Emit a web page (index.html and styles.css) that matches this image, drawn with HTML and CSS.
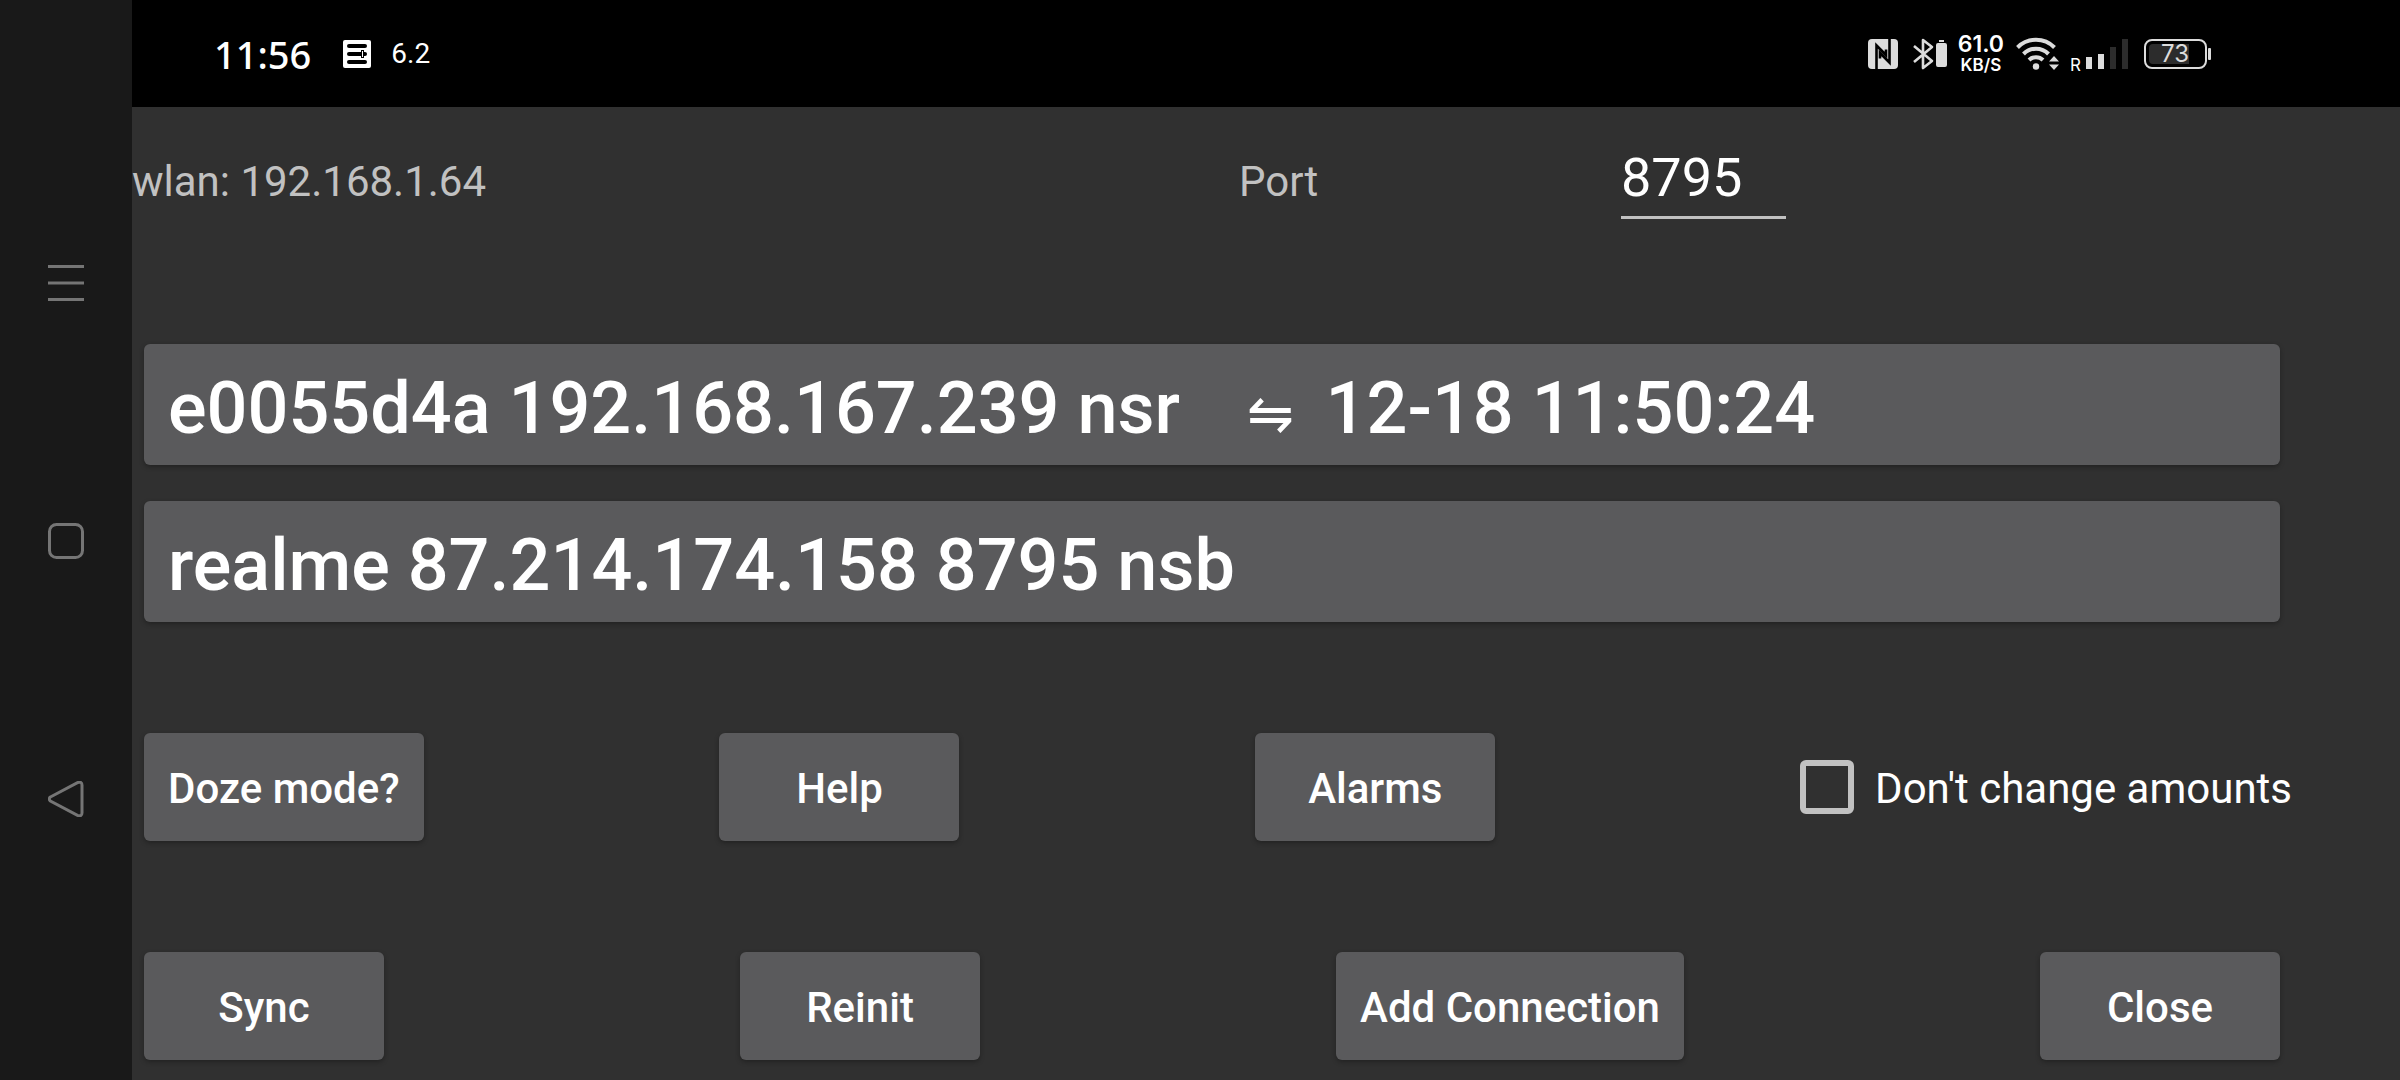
FILE: index.html
```html
<!DOCTYPE html>
<html lang="en">
<head>
<meta charset="utf-8">
<meta name="viewport" content="width=device-width, initial-scale=1">
<title>Connections</title>
<link rel="stylesheet" href="styles.css">
</head>
<body>
<nav class="nav" aria-label="System navigation">
  <button class="nav-key" type="button" aria-label="Recent apps">
    <svg viewBox="0 0 36 36"><path d="M0 1.5h36M0 18h36M0 34.5h36"/></svg>
  </button>
  <button class="nav-key" type="button" aria-label="Home">
    <svg viewBox="0 0 36 36"><rect x="1.5" y="1.5" width="33" height="33" rx="7"/></svg>
  </button>
  <button class="nav-key" type="button" aria-label="Back">
    <svg viewBox="0 0 36 36"><path d="M2.4 16 29.5 1.6q4.5-1.600 4.500 2.600v27.600q0 4.200-4.500 2.600L2.400 20q-2.400-2 0-4z"/></svg>
  </button>
</nav>
<div class="screen">
  <header class="status">
    <div class="status-group">
      <span class="clock">11:56</span>
      <svg class="app-icon" viewBox="0 0 28 28"><rect width="28" height="28" rx="2" fill="#fff"/><g fill="#000"><rect x="4" y="4" width="20" height="4" rx="2"/><rect x="4" y="12" width="20" height="4" rx="2"/><rect x="4" y="20" width="20" height="4" rx="2"/></g><rect x="18.500" y="10.500" width="2" height="7" fill="#fff" stroke="#000"/></svg>
      <span class="reading">6.2</span>
    </div>
    <div class="status-group">
      <svg class="nfc" viewBox="0 0 30 30"><rect width="30" height="30" rx="4" fill="#dcdcdc"/><path d="M8.500 30V6.500L18 16v-5.500M21.500 0v23.500L12 14v5.500" fill="none" stroke="#000" stroke-width="2.600"/></svg>
      <svg class="bluetooth" viewBox="0 0 34 34"><path d="M1 9l18 15-9 7V3l9 7L1 25" fill="none" stroke="#dcdcdc" stroke-width="2.600" stroke-linejoin="round"/><path d="M26 3h5v2h-5zM25 6h7q2 0 2 2v20q0 2-2 2h-7q-2 0-2-2V8q0-2 2-2z" fill="#dcdcdc"/></svg>
      <span class="speed"><span class="speed-value">61.0</span><span class="speed-unit">KB/S</span></span>
      <svg class="wifi" viewBox="0 0 46 36"><g fill="none" stroke="#dcdcdc" stroke-width="4"><path d="M1.500 11.500a26 26 0 0 1 37 0"/><path d="M7.500 18a17.500 17.500 0 0 1 25 0"/><path d="M13 24a10 10 0 0 1 14 0"/></g><g fill="#dcdcdc"><circle cx="20" cy="30.500" r="3.200"/><path d="M38 20l5 5.500H33zM38 34l5-5.500H33z"/></g></svg>
      <span class="roaming">R</span>
      <svg class="signal" viewBox="0 0 43 30"><path d="M0 18h6v12H0zM12 15h6v15h-6z" fill="#dcdcdc"/><path d="M24 8h6v22h-6zM36 0h6v30h-6z" fill="#2c2c2c"/></svg>
      <span class="battery"><span class="battery-level">73</span></span>
    </div>
  </header>
  <main class="content">
    <div class="network">
      <span>wlan: 192.168.1.64</span>
      <label for="port">Port</label>
      <input class="port" id="port" type="text" inputmode="numeric" value="8795">
    </div>
    <div class="connections">
      <button class="btn connection" type="button">e0055d4a 192.168.167.239 nsr&nbsp;&nbsp; <span class="sync-mark">⇋</span> 12-18 11:50:24</button>
      <button class="btn connection" type="button">realme 87.214.174.158 8795 nsb</button>
    </div>
    <div class="row">
      <button class="btn" type="button">Doze mode?</button>
      <button class="btn" type="button">Help</button>
      <button class="btn" type="button">Alarms</button>
      <label class="check"><input type="checkbox"><span class="check-text">Don't change amounts</span></label>
    </div>
    <div class="row">
      <button class="btn" type="button">Sync</button>
      <button class="btn" type="button">Reinit</button>
      <button class="btn" type="button">Add Connection</button>
      <button class="btn" type="button">Close</button>
    </div>
  </main>
</div>
</body>
</html>
```
FILE: styles.css
```css
* { box-sizing: border-box; }

body {
  display: flex;
  min-height: 100vh;
  margin: 0;
  background: #303030;
  color: #fff;
  font: 42px/48px Roboto, sans-serif;
}

svg { display: block; flex: none; }

.nav {
  display: flex;
  flex: none;
  flex-direction: column;
  align-items: center;
  justify-content: center;
  gap: 222px;
  width: 132px;
  padding-top: 2px;
  background: #191919;
}

.nav-key {
  width: 36px;
  height: 36px;
  padding: 0;
  border: 0;
  background: none;
}

.nav-key svg {
  width: 36px;
  height: 36px;
  fill: none;
  stroke: #757575;
  stroke-width: 3;
}

.screen { flex: 1; min-width: 0; }

.status {
  display: flex;
  align-items: center;
  justify-content: space-between;
  height: 107px;
  padding: 0 193px 0 82px;
  background: #000;
  font-family: Inter, sans-serif;
}

.status-group { display: flex; align-items: center; }

.clock { font-family: "Noto Sans", sans-serif; font-size: 38px; font-weight: 500; }

.app-icon { width: 28px; height: 28px; margin: 0 20px 0 32px; }

.reading { font: 28px/48px Roboto, sans-serif; }

.nfc { width: 30px; height: 30px; margin-right: 15px; }

.bluetooth { width: 34px; height: 34px; margin-right: 11px; }

.speed {
  display: flex;
  flex-direction: column;
  align-items: center;
  margin-right: 12px;
  font-weight: 600;
}

.speed-value { font-size: 23px; line-height: 22px; }

.speed-unit { font-size: 17px; line-height: 20px; }

.wifi { width: 46px; height: 36px; margin-right: 8px; }

.roaming { align-self: flex-end; font-size: 17px; line-height: 20px; }

.signal { width: 43px; height: 30px; margin: 0 15px 0 5px; }

.battery {
  position: relative;
  width: 63px;
  height: 30px;
  padding: 3px;
  border: 2px solid #dcdcdc;
  border-radius: 8px;
  color: #dcdcdc;
}

.battery::after {
  position: absolute;
  top: 7px;
  right: -6px;
  width: 3px;
  height: 12px;
  border-radius: 1px;
  background: #dcdcdc;
  content: "";
}

.battery-level {
  display: block;
  width: 40px;
  border-radius: 4px 0 0 4px;
  background: #2c2c2c;
  font-size: 24px;
  line-height: 20px;
  text-align: right;
}

.content { padding: 43px 108px 20px 0; }

.network {
  display: grid;
  grid-template-columns: 1107fr 382fr 671fr;
  align-items: baseline;
  color: #c1c1c1;
}

.port {
  width: 165px;
  height: 69px;
  padding: 0 0 12px;
  border: 0;
  border-bottom: 3px solid #c1c1c1;
  background: none;
  color: #fff;
  font: 54px/54px Roboto, sans-serif;
}

.connections {
  display: flex;
  flex-direction: column;
  gap: 36px;
  margin: 125px 12px 111px;
}

.btn {
  min-width: 240px;
  height: 108px;
  padding: 4px 24px 0;
  border: 0;
  border-radius: 6px;
  background: #5a5a5c;
  box-shadow: 0 2px 5px rgba(0, 0, 0, .3);
  color: #fff;
  font: 500 42px/48px Roboto, sans-serif;
}

.connection {
  height: 121px;
  padding-top: 8px;
  font-size: 72px;
  line-height: 84px;
  text-align: left;
}

.sync-mark {
  display: inline-block;
  width: 74px;
  font-size: 56px;
  font-weight: 400;
  line-height: 56px;
  text-align: center;
}

.row {
  display: flex;
  align-items: center;
  justify-content: space-between;
  padding-left: 12px;
}

.row + .row { margin-top: 111px; padding-right: 12px; }

.check {
  display: flex;
  align-items: center;
  gap: 21px;
  padding-left: 9px;
}

.check input {
  width: 54px;
  height: 54px;
  margin: 0;
  border: 6px solid #c1c1c1;
  border-radius: 6px;
  appearance: none;
}

.check-text { padding-top: 4px; }
```
